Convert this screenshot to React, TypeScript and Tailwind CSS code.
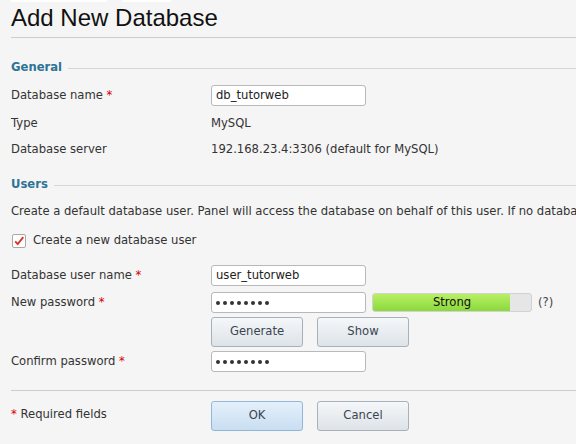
const font = { fontFamily: '"DejaVu Sans", Verdana, sans-serif' };

const Req = () => <span className="text-[#d40000]"> *</span>;

const Legend = ({ title }: { title: string }) => (
  <div className="flex items-center h-4">
    <span className="font-bold text-[#2e7396] pr-[6px]">{title}</span>
    <div className="flex-1 h-px bg-[#d6d6d6]" />
  </div>
);

const Dots = () => (
  <div className="flex gap-[3px]">
    {Array.from({ length: 8 }).map((_, i) => (
      <span key={i} className="w-[4px] h-[4px] rounded-full bg-[#333]" />
    ))}
  </div>
);

const Input = ({ value, password }: { value: string; password?: boolean }) => (
  <div className="w-[155px] h-[21px] border border-[#b9b9b9] rounded-[3px] bg-white flex items-center px-[4px] text-[#222]">
    {password ? <Dots /> : value}
  </div>
);

const Button = ({ label, primary }: { label: string; primary?: boolean }) => (
  <button
    className={`w-[92px] h-[30px] rounded-[3px] border text-[#3a4450] ${
      primary
        ? 'border-[#93b7d9] bg-gradient-to-b from-[#e4f0fb] to-[#c9def2]'
        : 'border-[#a8b1b9] bg-gradient-to-b from-[#f5f7f9] to-[#dde3e8]'
    }`}
  >
    {label}
  </button>
);

const Row = ({ label, req, children, h }: { label: string; req?: boolean; children: React.ReactNode; h: string }) => (
  <div className={`flex items-center ${h}`}>
    <div className="w-[200px] text-[#333]">
      {label}
      {req && <Req />}
    </div>
    {children}
  </div>
);

export default function App() {
  return (
    <div className="min-h-[444px] w-[576px] overflow-hidden bg-[#f5f5f5] text-[11.6px] text-[#333]" style={font}>
      <div className="flex h-[2px]">
        <div className="ml-[11px] w-[96px] bg-white" />
        <div className="ml-[15px] w-[49px] bg-white" />
      </div>
      <div className="pl-[11px]">
        <h1
          className="text-[24px] leading-[30px] text-[#111] mt-[1px]"
          style={{ fontFamily: '"Liberation Sans", Arial, sans-serif' }}
        >
          Add New Database
        </h1>
        <div className="h-px bg-[#cccccc] mt-[4px]" />

        <div className="mt-[22px]">
          <Legend title="General" />
        </div>
        <div className="mt-[9px]">
          <Row label="Database name" req h="h-[21px]">
            <Input value="db_tutorweb" />
          </Row>
        </div>
        <Row label="Type" h="h-[15px] mt-[10px]">
          <span>MySQL</span>
        </Row>
        <Row label="Database server" h="h-[15px] mt-[11px]">
          <span>192.168.23.4:3306 (default for MySQL)</span>
        </Row>

        <div className="mt-[20px]">
          <Legend title="Users" />
        </div>
        <div className="h-[15px] mt-[10px] whitespace-nowrap">
          Create a default database user. Panel will access the database on behalf of this user. If no database user
        </div>
        <label className="flex items-center h-[16px] mt-[15px]">
          <span className="w-[14px] h-[14px] ml-[1px] border border-[#a9a9a9] rounded-[2px] bg-white flex items-center justify-center">
            <svg width="14" height="14" viewBox="0 0 14 14">
              <path d="M2.5 7.5 L5.5 10.5 L12 2.5" fill="none" stroke="#d9352b" strokeWidth="2.2" />
            </svg>
          </span>
          <span className="ml-[7px]">Create a new database user</span>
        </label>

        <div className="mt-[16px]">
          <Row label="Database user name" req h="h-[21px]">
            <Input value="user_tutorweb" />
          </Row>
        </div>
        <div className="mt-[6px]">
          <Row label="New password" req h="h-[21px]">
            <Input value="" password />
            <div className="ml-[6px] w-[160px] h-[19px] rounded-[3px] border border-[#d2d2d2] bg-[#e6e6e6] relative overflow-hidden">
              <div className="absolute left-0 top-0 bottom-0 w-[137px] bg-gradient-to-b from-[#b8f064] to-[#8bd83c]" />
              <span className="relative flex h-full items-center justify-center text-[#111]">Strong</span>
            </div>
            <span className="ml-[6px] text-[#444]">(?)</span>
          </Row>
        </div>
        <div className="flex gap-[14px] pl-[200px] mt-[4px]">
          <Button label="Generate" />
          <Button label="Show" />
        </div>
        <div className="mt-[4px]">
          <Row label="Confirm password" req h="h-[21px]">
            <Input value="" password />
          </Row>
        </div>

        <div className="h-px bg-[#cccccc] mt-[18px]" />

        <div className="flex items-center mt-[10px]">
          <div className="w-[200px] -mt-[3px]">
            <span className="text-[#d40000]">*</span> Required fields
          </div>
          <div className="flex gap-[14px]">
            <Button label="OK" primary />
            <Button label="Cancel" />
          </div>
        </div>
      </div>
    </div>
  );
}
